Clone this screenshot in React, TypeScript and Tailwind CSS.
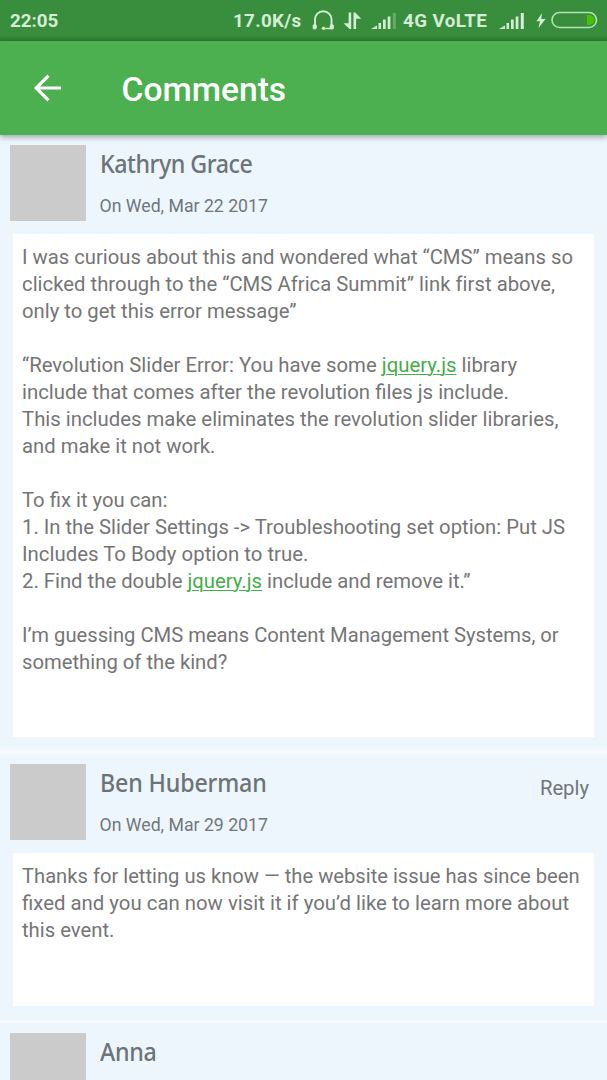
import React from "react";

const Link = ({ children }: { children: React.ReactNode }) => (
  <a className="text-[#45ad49] underline decoration-1 underline-offset-2">{children}</a>
);

function Signal({ dimLast = false, className = "" }: { dimLast?: boolean; className?: string }) {
  return (
    <svg className={`shrink-0 ${className}`} width="26" height="18" viewBox="0 0 26 18" fill="#d5ecd6">
      <path d="M0 17L6 13.5V17Z" />
      <rect x="7.5" y="11" width="2.5" height="6" />
      <rect x="12" y="7.5" width="2.7" height="9.5" />
      <rect x="16.7" y="4.5" width="2.7" height="12.5" />
      <rect x="21.8" y="1" width="3" height="16" opacity={dimLast ? 0.3 : 1} />
    </svg>
  );
}

function StatusBar() {
  return (
    <div className="flex h-[41px] shrink-0 items-start whitespace-nowrap bg-gradient-to-b from-[#388e3c] from-85% to-[#2f7d33] pl-[10px] text-[18.8px] font-bold leading-[42px] text-[#d5ecd6]">
      <span className="w-[223px]">22:05</span>
      <span className="w-[79px] tracking-[0.3px]">17.0K/s</span>
      <svg className="mt-[10px] shrink-0" width="23" height="21" viewBox="0 0 23 21" fill="none" stroke="#d5ecd6" strokeWidth="1.9">
        <path d="M3 15V9.5a8.2 8.2 0 0 1 16.5 0V15" />
        <path d="M1.2 15h3v3.8h-3zM18.3 15h3v3.8h-3z" fill="#d5ecd6" strokeWidth="1" />
        <path d="M20 18.5h-8" strokeWidth="1.5" />
        <circle cx="11.5" cy="18.3" r="1.7" fill="#d4ef9b" stroke="none" />
      </svg>
      <svg className="ml-[8px] mt-[12px] shrink-0" width="20" height="18" viewBox="0 0 20 18" fill="#d5ecd6">
        <path d="M5.6 0.5H8.2V17H6.5L0.5 11.3H5.6ZM10.5 0.5H12.2L18.2 6.8H13.1V17H10.5Z" />
      </svg>
      <Signal dimLast className="ml-[8px] mt-[12px]" />
      <span className="ml-[6px] w-[96px] tracking-[0.4px]">4G VoLTE</span>
      <Signal className="mt-[12px]" />
      <svg className="ml-[11px] mt-[13px] shrink-0" width="10" height="15" viewBox="0 0 10 15" fill="#d5ecd6">
        <path d="M6 0L0.5 8.2H4L2.5 15L9.5 6H5.3Z" />
      </svg>
      <svg className="ml-[5px] mt-[11px] shrink-0" width="47" height="18" viewBox="0 0 47 18">
        <rect x="1" y="1.5" width="44.5" height="15" rx="7.5" fill="none" stroke="#b3e3b5" strokeWidth="1.6" />
        <path d="M36 4h2.5a5 5 0 0 1 0 10H36Z" fill="#48c200" />
      </svg>
    </div>
  );
}

type CommentProps = { name: string; date?: string; reply?: boolean; height: string; nameSpacing: string; children?: React.ReactNode };

function Comment({ name, date, reply, height, nameSpacing, children }: CommentProps) {
  return (
    <article className={`shrink-0 bg-[#edf6fc] px-[10px] pt-[10px] ${height}`}>
      <header className="flex h-[89px] items-start">
        <div className="h-[76px] w-[76px] shrink-0 bg-[#cbcbcb]" />
        <div className="ml-[14px] flex-1 whitespace-nowrap">
          <h2 className={`origin-left scale-x-[0.895] pt-[2px] font-['Noto_Sans',sans-serif] text-[26px] font-medium leading-[32px] text-[#6c7478] ${nameSpacing}`}>{name}</h2>
          <p className="-ml-[0.5px] mt-[15px] text-[17.7px] leading-[24px] text-[#70777b]">{date}</p>
        </div>
        {reply && <button className="mr-[8px] mt-[11px] text-[20.25px] leading-[27px] text-[#70777b]">Reply</button>}
      </header>
      {children && (
        <div className="mx-[3px] bg-white pl-[9px] pt-[10px] text-[20.26px] leading-[27px] text-[#757575]">{children}</div>
      )}
    </article>
  );
}

function Line({ children, className = "" }: { children?: React.ReactNode; className?: string }) {
  return <p className={`h-[27px] whitespace-nowrap ${className}`}>{children}</p>;
}

export default function App() {
  return (
    <div className="flex h-[1080px] w-[607px] flex-col overflow-hidden bg-[#f6f8fb] font-['Roboto',sans-serif]">
      <StatusBar />
      <div className="z-10 flex h-[94px] shrink-0 items-center bg-[#4caf50] shadow-[0_2px_6px_rgba(0,0,0,0.35)]">
        <svg className="ml-[34px]" width="28" height="28" viewBox="0 0 28 28" fill="none" stroke="white" strokeWidth="3.2">
          <path d="M27 14H3M14.5 1.7L2.2 14L14.5 26.3" />
        </svg>
        <h1 className="ml-[59.5px] pt-[3px] text-[33.6px] font-medium leading-[40px] text-white">Comments</h1>
      </div>
      <Comment name="Kathryn Grace" date="On Wed, Mar 22 2017" height="h-[615px]" nameSpacing="tracking-[-0.55px]">
        <div className="h-[493px]">
          <Line>I was curious about this and wondered what “CMS” means so</Line>
          <Line className="tracking-[0.03px]">clicked through to the “CMS Africa Summit” link first above,</Line>
          <Line>only to get this error message”</Line>
          <Line />
          <Line className="text-[20.34px]">“Revolution Slider Error: You have some <Link>jquery.js</Link> library</Line>
          <Line className="text-[20.37px]">include that comes after the revolution files js include.</Line>
          <Line className="text-[20.34px]">This includes make eliminates the revolution slider libraries,</Line>
          <Line>and make it not work.</Line>
          <Line />
          <Line>To fix it you can:</Line>
          <Line>1. In the Slider Settings -&gt; Troubleshooting set option: Put JS</Line>
          <Line className="text-[20.4px]">Includes To Body option to true.</Line>
          <Line className="text-[20.3px]">2. Find the double <Link>jquery.js</Link> include and remove it.”</Line>
          <Line />
          <Line className="text-[20.2px]">I’m guessing CMS means Content Management Systems, or</Line>
          <Line>something of the kind?</Line>
        </div>
      </Comment>
      <div className="h-[4px] shrink-0" />
      <Comment name="Ben Huberman" date="On Wed, Mar 29 2017" reply height="h-[266px]" nameSpacing="tracking-[-0.2px]">
        <div className="h-[143px]">
          <Line className="text-[20.18px]">Thanks for letting us know — the website issue has since been</Line>
          <Line className="text-[20.36px]">fixed and you can now visit it if you’d like to learn more about</Line>
          <Line>this event.</Line>
        </div>
      </Comment>
      <div className="h-[3px] shrink-0" />
      <Comment name="Anna" height="h-[100px]" nameSpacing="tracking-[-0.3px]" />
    </div>
  );
}
